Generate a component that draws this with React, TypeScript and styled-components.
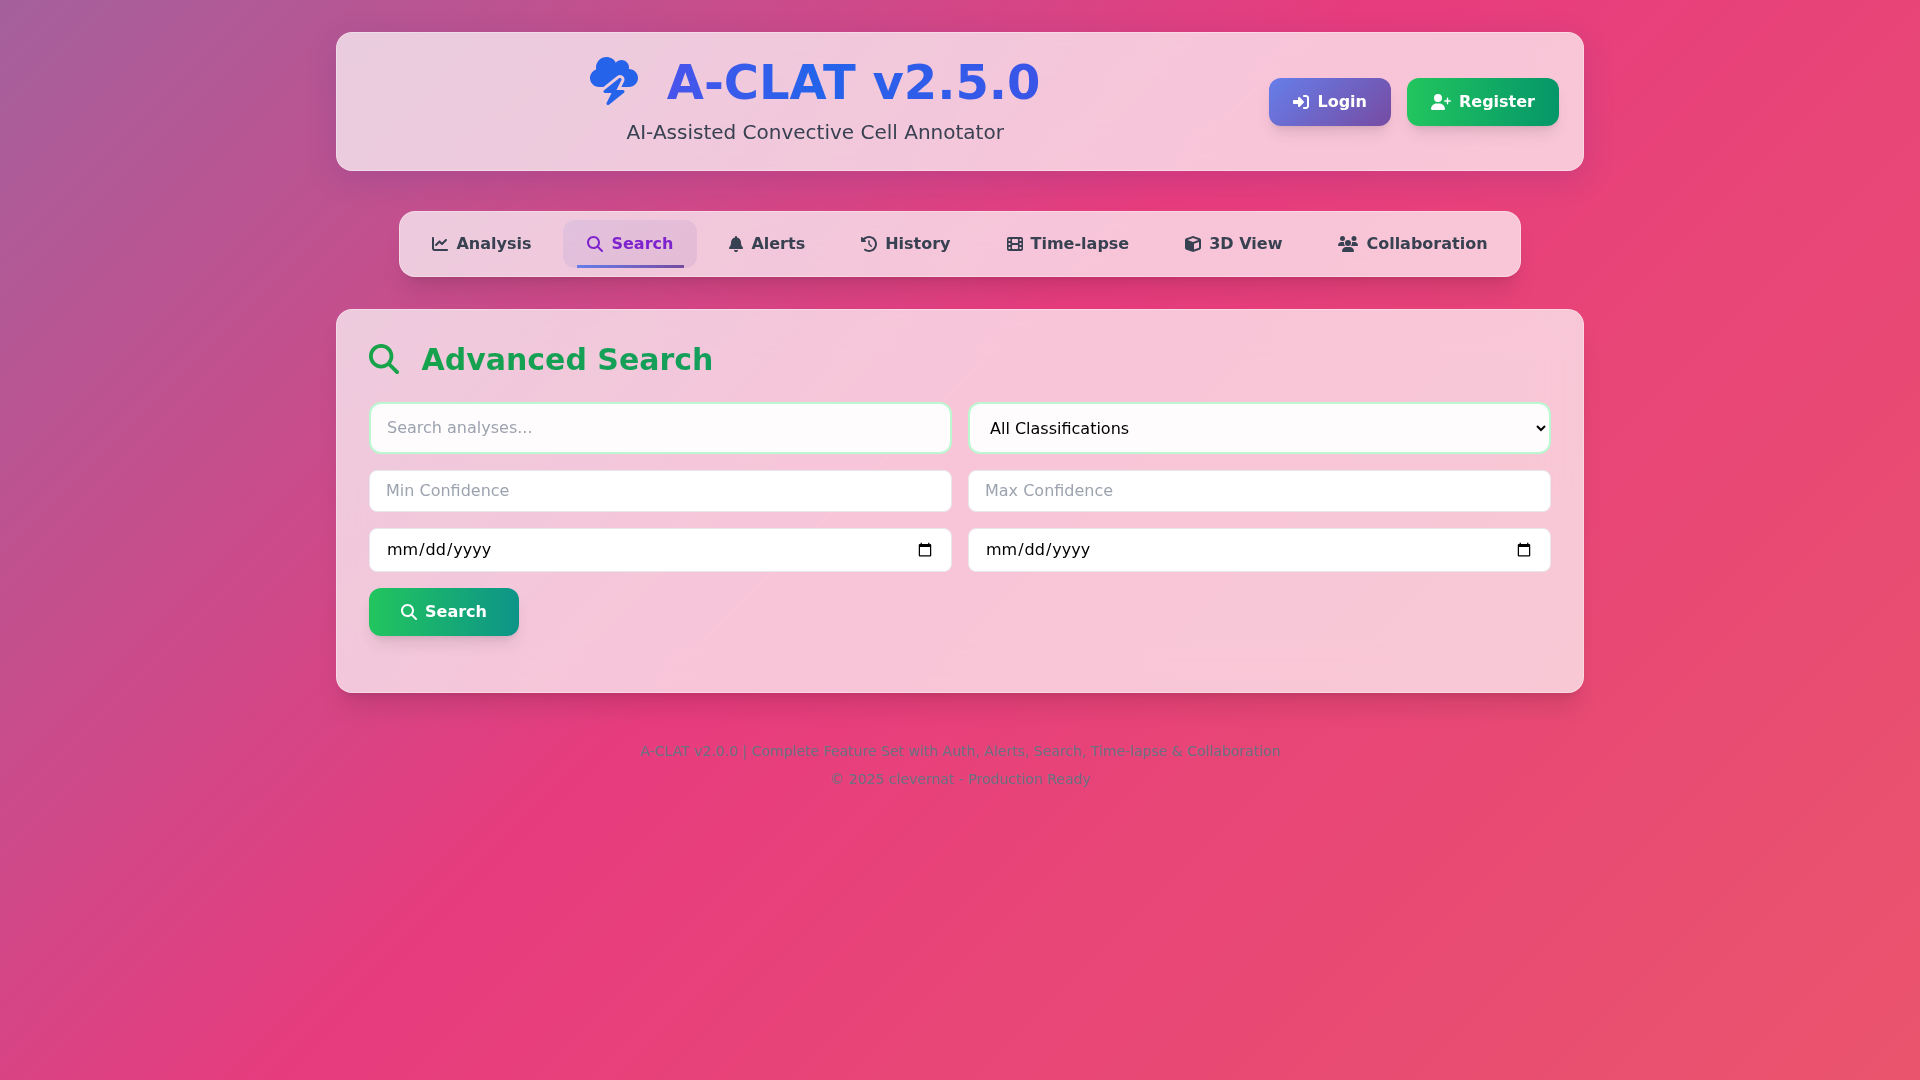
import React from 'react';
import styled, { createGlobalStyle } from 'styled-components';
import {
  FaBell,
  FaChartLine,
  FaClockRotateLeft,
  FaCloudBolt,
  FaCube,
  FaFilm,
  FaMagnifyingGlass,
  FaRightToBracket,
  FaUserPlus,
  FaUsers,
} from 'react-icons/fa6';

const GlobalStyle = createGlobalStyle`
  *, *::before, *::after { box-sizing: border-box; }
  body {
    margin: 0;
    min-height: 100vh;
    font-family: "DejaVu Sans", "Noto Sans", sans-serif;
    font-size: 16px;
    line-height: 24px;
    color: #000;
    background: linear-gradient(-45deg, #ee7752, #e73c7e, #23a6d5, #23d5ab);
    background-size: 400% 400%;
    background-position: 87% 50%;
  }
  h1, h2, p { margin: 0; }
  input, select, button { font: inherit; color: inherit; }
`;

const Page = styled.div`
  max-width: 1280px;
  margin: 0 auto;
  padding: 32px 16px;
`;

const glass = `
  background: rgba(255, 255, 255, 0.7);
  border: 1px solid rgba(255, 255, 255, 0.3);
  border-radius: 16px;
  backdrop-filter: blur(20px);
`;

const Header = styled.header`
  ${glass}
  display: flex;
  align-items: center;
  justify-content: space-between;
  padding: 24px;
  box-shadow: 0 8px 32px rgba(31, 38, 135, 0.15);
`;

const Brand = styled.div`
  flex: 1;
  text-align: center;
`;

const Title = styled.h1`
  margin-bottom: 12px;
  font-size: 48px;
  line-height: 48px;
  font-weight: 700;
  color: transparent;
  background: linear-gradient(to right, #9333ea, #2563eb, #4f46e5);
  background-clip: text;
  -webkit-background-clip: text;

  svg {
    width: 48px;
    height: 48px;
    margin-right: 12px;
    vertical-align: -6px;
    color: #2563eb;
  }
`;

const Tagline = styled.p`
  font-size: 20px;
  line-height: 28px;
  color: #374151;
`;

const Actions = styled.div`
  display: flex;
  gap: 16px;
`;

const Icon = styled.span<{ $width?: number }>`
  display: inline-flex;
  svg {
    width: ${(p) => p.$width ?? 16}px;
    height: 16px;
  }
`;

const Button = styled.button<{ $fill: string; $wide?: boolean }>`
  display: inline-flex;
  align-items: center;
  gap: 8px;
  padding: 12px ${(p) => (p.$wide ? 32 : 24)}px;
  border: 0;
  border-radius: 12px;
  font-weight: 600;
  color: #fff;
  background: ${(p) => p.$fill};
  box-shadow: 0 10px 15px -3px rgba(0, 0, 0, 0.1), 0 4px 6px -4px rgba(0, 0, 0, 0.1);
  cursor: pointer;
`;

const Nav = styled.nav`
  ${glass}
  display: flex;
  flex-wrap: wrap;
  gap: 8px;
  width: fit-content;
  margin: 40px auto 32px;
  padding: 8px;
  box-shadow: 0 20px 25px -5px rgba(0, 0, 0, 0.1), 0 8px 10px -6px rgba(0, 0, 0, 0.1);
`;

const Tab = styled.button<{ $active: boolean }>`
  position: relative;
  display: flex;
  align-items: center;
  gap: 8px;
  padding: 12px 24px;
  border: 0;
  border-radius: 12px;
  font-weight: 600;
  color: ${(p) => (p.$active ? '#7e22ce' : '#374151')};
  background: ${(p) =>
    p.$active ? 'linear-gradient(135deg, rgba(102, 126, 234, 0.1), rgba(118, 75, 162, 0.1))' : 'transparent'};
  cursor: pointer;

  &::after {
    content: '';
    display: ${(p) => (p.$active ? 'block' : 'none')};
    position: absolute;
    bottom: 0;
    left: 10%;
    width: 80%;
    height: 3px;
    background: linear-gradient(90deg, #667eea, #764ba2);
  }
`;

const Panel = styled.main`
  ${glass}
  padding: 32px 32px 56px;
  box-shadow: 0 20px 25px -5px rgba(0, 0, 0, 0.1), 0 8px 10px -6px rgba(0, 0, 0, 0.1);
`;

const Heading = styled.h2`
  margin-bottom: 24px;
  font-size: 30px;
  line-height: 36px;
  font-weight: 700;
  color: transparent;
  background: linear-gradient(to right, #16a34a, #0d9488);
  background-clip: text;
  -webkit-background-clip: text;

  svg {
    width: 30px;
    height: 30px;
    margin-right: 12px;
    vertical-align: -4px;
    color: #16a34a;
  }
`;

const Form = styled.form`
  display: grid;
  grid-template-columns: repeat(2, minmax(0, 1fr));
  gap: 16px;
`;

const Field = styled.input`
  width: 100%;
  padding: 8px 16px;
  border: 1px solid #e5e7eb;
  border-radius: 8px;
  background: #fff;

  &::placeholder {
    color: #9ca3af;
    opacity: 1;
  }
`;

const KeyField = styled(Field)`
  padding: 12px 16px;
  border: 2px solid #bbf7d0;
  border-radius: 12px;
  background: rgba(255, 255, 255, 0.95);
`;

const Submit = styled(Button)`
  justify-self: start;
`;

const Footer = styled.footer`
  display: grid;
  gap: 8px;
  margin-top: 48px;
  text-align: center;
  font-size: 14px;
  line-height: 20px;
  color: #6b7280;
`;

const tabs = [
  { label: 'Analysis', icon: FaChartLine, width: 16 },
  { label: 'Search', icon: FaMagnifyingGlass, width: 16 },
  { label: 'Alerts', icon: FaBell, width: 14 },
  { label: 'History', icon: FaClockRotateLeft, width: 16 },
  { label: 'Time-lapse', icon: FaFilm, width: 16 },
  { label: '3D View', icon: FaCube, width: 16 },
  { label: 'Collaboration', icon: FaUsers, width: 20 },
];

export default function App() {
  const [active, setActive] = React.useState('Search');

  return (
    <>
      <GlobalStyle />
      <Page>
        <Header>
          <Brand>
            <Title>
              <FaCloudBolt aria-hidden /> A-CLAT v2.5.0
            </Title>
            <Tagline>AI-Assisted Convective Cell Annotator</Tagline>
          </Brand>
          <Actions>
            <Button type="button" $fill="linear-gradient(135deg, #667eea, #764ba2)">
              <Icon><FaRightToBracket aria-hidden /></Icon>
              Login
            </Button>
            <Button type="button" $fill="linear-gradient(to right, #22c55e, #059669)">
              <Icon $width={20}><FaUserPlus aria-hidden /></Icon>
              Register
            </Button>
          </Actions>
        </Header>

        <Nav>
          {tabs.map(({ label, icon: Glyph, width }) => (
            <Tab key={label} type="button" $active={label === active} onClick={() => setActive(label)}>
              <Icon $width={width}><Glyph aria-hidden /></Icon>
              {label}
            </Tab>
          ))}
        </Nav>

        <Panel>
          <Heading>
            <FaMagnifyingGlass aria-hidden /> Advanced Search
          </Heading>
          <Form onSubmit={(e) => e.preventDefault()}>
            <KeyField type="text" placeholder="Search analyses..." aria-label="Search analyses" />
            <KeyField as="select" aria-label="Classification">
              <option>All Classifications</option>
            </KeyField>
            <Field type="number" placeholder="Min Confidence" aria-label="Min Confidence" />
            <Field type="number" placeholder="Max Confidence" aria-label="Max Confidence" />
            <Field type="date" aria-label="From date" />
            <Field type="date" aria-label="To date" />
            <Submit type="submit" $wide $fill="linear-gradient(to right, #22c55e, #0d9488)">
              <Icon><FaMagnifyingGlass aria-hidden /></Icon>
              Search
            </Submit>
          </Form>
        </Panel>

        <Footer>
          <p>A-CLAT v2.0.0 | Complete Feature Set with Auth, Alerts, Search, Time-lapse &amp; Collaboration</p>
          <p>© 2025 clevernat - Production Ready</p>
        </Footer>
      </Page>
    </>
  );
}
